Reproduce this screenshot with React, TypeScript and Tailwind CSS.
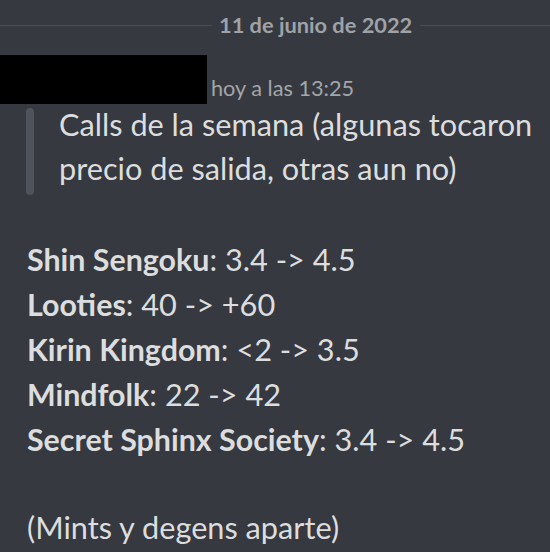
import React from "react";

const items: [string, string][] = [
  ["Shin Sengoku", ": 3.4 -> 4.5"],
  ["Looties", ": 40 -> +60"],
  ["Kirin Kingdom", ": <2 -> 3.5"],
  ["Mindfolk", ": 22 -> 42"],
  ["Secret Sphinx Society", ": 3.4 -> 4.5"],
];

export default function App() {
  return (
    <div className="w-[550px] h-[552px] overflow-hidden bg-[#36393f] font-['Lato',sans-serif] text-[#dcddde]">
      {/* date divider */}
      <div className="pt-[12px] flex items-center h-[38px]">
        <div className="w-[212px] h-px bg-[#4a4d53]" />
        <span className="ml-[7px] text-[21.8px] leading-[26px] font-bold text-[#9fa2a7] whitespace-nowrap">
          11 de junio de 2022
        </span>
        <div className="ml-[8px] flex-1 h-px bg-[#4a4d53]" />
      </div>

      {/* header */}
      <div className="mt-[17px] flex items-end">
        <div className="w-[207px] h-[49px] bg-black" />
        <span className="ml-[4px] pb-[3px] text-[21.7px] leading-[26px] text-[#a3a6aa] whitespace-nowrap">
          hoy a las 13:25
        </span>
      </div>

      {/* quote */}
      <div className="-mt-px flex items-start pl-[26px]">
        <div className="mt-[5px] w-[8px] h-[87px] rounded-[4px] bg-[#4f545c] shrink-0" />
        <div className="ml-[25px] flex-1 pr-[8px] text-[30.7px] leading-[44px]">
          Calls de la semana (algunas tocaron precio de salida, otras aun no)
        </div>
      </div>

      {/* list */}
      <div className="mt-[42px] pl-[27px] text-[30.7px] leading-[44px]">
        {items.map(([name, rest]) => (
          <div key={name} className="whitespace-nowrap">
            <span className="font-bold text-[30.4px]">{name}</span>
            {rest}
          </div>
        ))}
        <div className="h-[44px]" />
        <div>(Mints y degens aparte)</div>
      </div>
    </div>
  );
}
